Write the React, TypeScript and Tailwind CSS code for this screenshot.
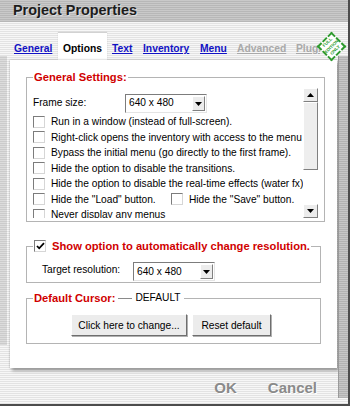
import React from "react";

const stripes =
  "bg-[repeating-linear-gradient(180deg,#f7f7f7_0px,#f7f7f7_1px,#e3e3e3_1px,#e3e3e3_2px)]";

function Box({ checked }: { checked?: boolean }) {
  return (
    <span className="flex h-[12px] w-[12px] shrink-0 items-center justify-center border border-t-[#7c7c7c] border-l-[#7c7c7c] border-b-[#d6d6d6] border-r-[#d6d6d6] bg-white">
      {checked ? (
        <svg width="9" height="8" viewBox="0 0 9 8">
          <path d="M1 4 L3.2 6.3 L8 1.2" fill="none" stroke="#000" strokeWidth="1.8" />
        </svg>
      ) : null}
    </span>
  );
}

function Arrow({ up }: { up?: boolean }) {
  return (
    <svg width="7" height="4" viewBox="0 0 7 4">
      <path d={up ? "M0 4 L3.5 0 L7 4 Z" : "M0 0 L7 0 L3.5 4 Z"} fill="#000" />
    </svg>
  );
}

function Select({ value }: { value: string }) {
  return (
    <div className="flex h-[19px] w-[82px] shrink-0 items-center border border-t-[#7c7c7c] border-l-[#7c7c7c] border-b-[#e4e4e4] border-r-[#e4e4e4] bg-white">
      <span className="flex-1 pl-[3px] text-[10.2px] leading-none text-black">{value}</span>
      <span className="mr-[1px] flex h-[15px] w-[13px] items-center justify-center border border-t-white border-l-white border-b-[#808080] border-r-[#808080] bg-[#ececec]">
        <Arrow />
      </span>
    </div>
  );
}

function Row({ text }: { text: string }) {
  return (
    <div className="flex h-[15.5px] items-center gap-[6px] whitespace-nowrap">
      <Box />
      <span>{text}</span>
    </div>
  );
}

function Btn({ label, w }: { label: string; w: string }) {
  return (
    <div
      className={`flex h-[22px] ${w} items-center justify-center border border-t-white border-l-white border-b-[#6e6e6e] border-r-[#6e6e6e] bg-[#ececec] text-[10.2px] text-black shadow-[1px_1px_0_#b0b0b0]`}
    >
      {label}
    </div>
  );
}

const options = [
  "Run in a window (instead of full-screen).",
  "Right-click opens the inventory with access to the menu",
  "Bypass the initial menu (go directly to the first frame).",
  "Hide the option to disable the transitions.",
  "Hide the option to disable the real-time effects (water fx)",
];

export default function App() {
  return (
    <div
      className={`relative flex h-[406px] w-[350px] flex-col overflow-hidden border-r-2 border-b-2 border-[#4c4c4c] ${stripes} font-['Liberation_Sans',Arial,sans-serif]`}
    >
      {/* title bar */}
      <div className="flex h-[22px] shrink-0 items-center bg-[repeating-linear-gradient(180deg,#c9c9c9_0px,#c9c9c9_1px,#b7b7b7_1px,#b7b7b7_2px)] pl-[13px] text-[14.4px] font-bold text-[#1c1c1c] [text-shadow:1px_1px_0_#dedede]">
        Project Properties
      </div>

      <div className="flex flex-1">
        <div className="w-[10px] shrink-0">
          <div className="mt-[34px] h-[289px] w-[7px] bg-[repeating-linear-gradient(180deg,#dcdcdc_0px,#dcdcdc_1px,#cbcbcb_1px,#cbcbcb_2px)]" />
        </div>

        <div className="flex w-[327px] shrink-0 flex-col">
          {/* tabs */}
          <div className="flex h-[38px] items-end text-[10.3px] font-bold leading-[13px]">
            <span className="mb-[5px] ml-[4px] w-[38px] text-[#1212c4] underline">General</span>
            <span className="ml-[6px] flex h-[27px] w-[49px] items-end justify-center bg-white pb-[5px] text-black shadow-[0_-1px_1px_rgba(0,0,0,0.15)]">
              Options
            </span>
            <span className="mb-[5px] ml-[5px] w-[20px] text-[#1212c4] underline">Text</span>
            <span className="mb-[5px] ml-[11px] w-[47px] text-[#1212c4] underline">Inventory</span>
            <span className="mb-[5px] ml-[10px] w-[27px] text-[#1212c4] underline">Menu</span>
            <span className="mb-[5px] ml-[10px] w-[49px] text-[#a9a9a9] underline">Advanced</span>
            <span className="mb-[5px] ml-[10px] w-[24px] overflow-hidden whitespace-nowrap text-[#a9a9a9] underline">
              Plugins
            </span>
          </div>

          {/* panel */}
          <div className="flex h-[308px] flex-col bg-white px-[16px] pt-[10px] text-[10.2px] text-black shadow-[0_0_2px_rgba(0,0,0,0.3),2px_3px_3px_rgba(0,0,0,0.3)]">
            <fieldset className="border border-[#b4b4b4]">
              <legend className="ml-[6px] px-[1px] text-[11.2px] font-bold leading-[14px] text-[#d00000]">
                General Settings:
              </legend>
              <div className="mt-[4px] mb-[3px] flex h-[130px] pr-[6px] pl-[6px]">
                <div className="min-w-0 flex-1 overflow-hidden">
                  <div className="mt-[6px] flex h-[19px] items-center">
                    <span className="mb-[2px] w-[92px]">Frame size:</span>
                    <Select value="640 x 480" />
                  </div>
                  <div className="mt-[1px]">
                    {options.map((t) => (
                      <Row key={t} text={t} />
                    ))}
                    <div className="flex h-[15.5px] items-center whitespace-nowrap">
                      <div className="flex w-[138px] items-center gap-[6px]">
                        <Box />
                        <span>Hide the "Load" button.</span>
                      </div>
                      <div className="flex items-center gap-[6px]">
                        <Box />
                        <span>Hide the "Save" button.</span>
                      </div>
                    </div>
                    <Row text="Never display any menus" />
                  </div>
                </div>
                <div className="flex w-[15px] shrink-0 flex-col">
                  <div className="flex h-[14px] items-center justify-center border border-t-white border-l-white border-b-[#808080] border-r-[#808080] bg-[#ececec]">
                    <Arrow up />
                  </div>
                  <div className="h-[68px] border border-t-white border-l-white border-b-[#808080] border-r-[#808080] bg-[#eeeeee]" />
                  <div className="flex-1 bg-white" />
                  <div className="flex h-[14px] items-center justify-center border border-t-white border-l-white border-b-[#808080] border-r-[#808080] bg-[#ececec]">
                    <Arrow />
                  </div>
                </div>
              </div>
            </fieldset>

            <fieldset className="mt-[17px] border border-[#b4b4b4]">
              <legend className="ml-[6px] flex items-center gap-[6px] px-[1px] text-[11.2px] font-bold leading-[14px] text-[#d00000]">
                <Box checked />
                <span>Show option to automatically change resolution.</span>
              </legend>
              <div className="flex items-center pt-[9px] pb-[1px] pl-[15px]">
                <span className="mb-[4px] w-[91px]">Target resolution:</span>
                <Select value="640 x 480" />
              </div>
            </fieldset>

            <fieldset className="mt-[8px] border border-[#b4b4b4]">
              <legend className="ml-[6px] flex items-center px-[1px] leading-[14px]">
                <span className="text-[11.2px] font-bold text-[#d00000]">Default Cursor:</span>
                <span className="mx-[3px] h-px w-[14px] bg-[#8a8a8a]" />
                <span className="pr-[2px] text-[10.2px] text-black">DEFAULT</span>
              </legend>
              <div className="flex gap-[5px] pt-[9px] pb-[7px] pl-[44px]">
                <Btn label="Click here to change..." w="w-[116px]" />
                <Btn label="Reset default" w="w-[79px]" />
              </div>
            </fieldset>
          </div>

          {/* footer */}
          <div className="flex h-[36px] items-center justify-end gap-[31px] pt-[4px] pr-[20px] text-[15px] font-bold text-[#8a8a8a] [text-shadow:1px_1px_0_#ffffff]">
            <span>OK</span>
            <span>Cancel</span>
          </div>
        </div>

        <div className="ml-[1px] w-[10px] shrink-0">
          <div className="mt-[34px] h-[342px] w-[10px] border-l border-[#9a9a9a] bg-[repeating-linear-gradient(180deg,#c6c6c6_0px,#c6c6c6_1px,#b2b2b2_1px,#b2b2b2_2px)]" />
        </div>
      </div>

      {/* edition badge */}
      <div className="absolute top-[36px] left-[321px] flex h-[21px] w-[21px] rotate-[-45deg] flex-col items-center justify-center border-2 border-dashed border-[#2f9b2f] bg-white text-[4.4px] leading-[5.4px] font-bold text-[#2f9b2f]">
        <span>FULL</span>
        <span>EDITION</span>
        <span>ONLY</span>
      </div>
    </div>
  );
}
